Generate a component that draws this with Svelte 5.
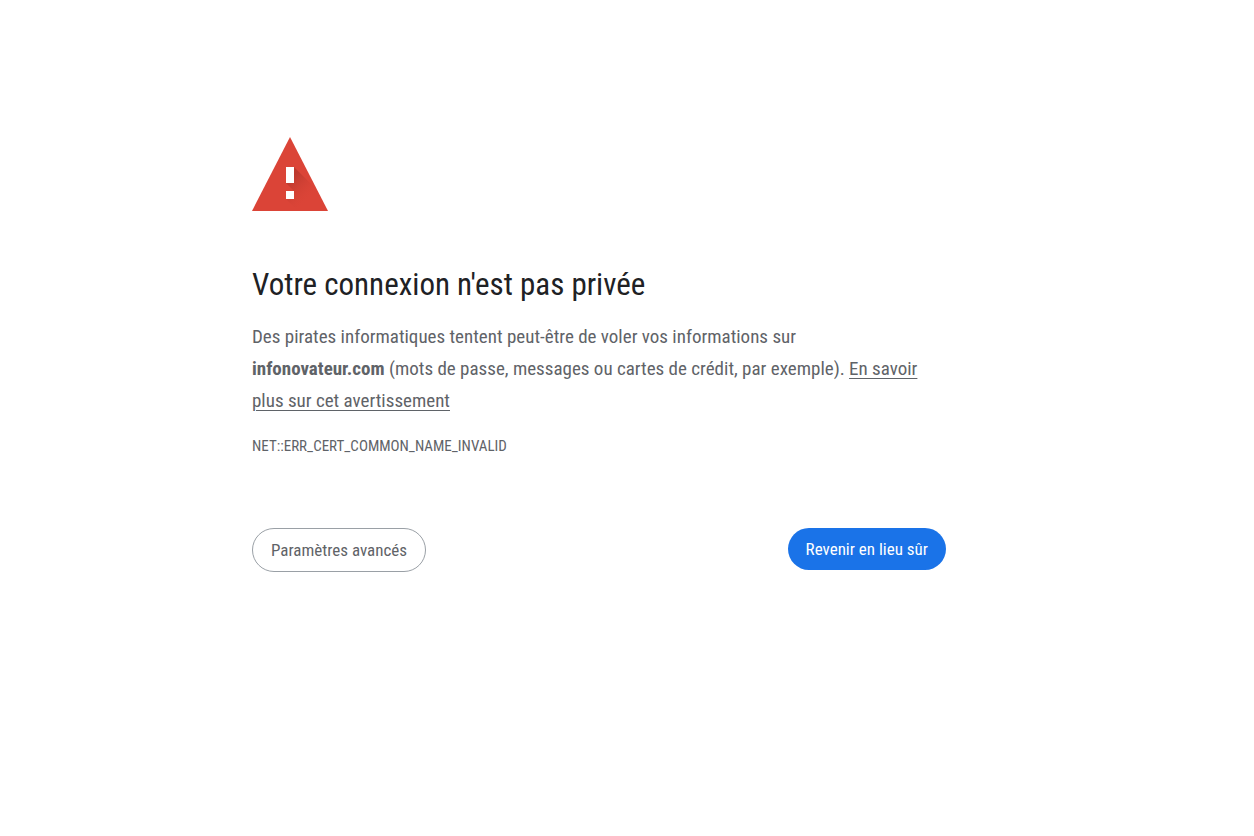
<script lang="ts">
	const host = 'infonovateur.com';
	const errorCode = 'NET::ERR_CERT_COMMON_NAME_INVALID';

	const goBack = () => {
		history.back();
	};
</script>

<main>
	<div class="interstitial">
		<svg class="icon" viewBox="0 0 76 74" aria-hidden="true">
			<defs>
				<linearGradient id="shadow" gradientUnits="userSpaceOnUse" x1="38" y1="42" x2="58" y2="62">
					<stop offset="0" stop-color="#a93228" stop-opacity="0.6" />
					<stop offset="1" stop-color="#db4437" stop-opacity="0" />
				</linearGradient>
			</defs>
			<path fill="#db4437" d="M38 0 76 74H0Z" />
			<path fill="url(#shadow)" d="M42 30 62 50 74 74H46L34 62H42V54L34 46H42Z" />
			<path fill="#fff" d="M34 30h8v16h-8zM34 54h8v8h-8z" />
		</svg>

		<h1>Votre connexion n'est pas privée</h1>
		<p>
			Des pirates informatiques tentent peut-être de voler vos informations sur<br />
			<strong>{host}</strong> (mots de passe, messages ou cartes de crédit, par exemple).
			<a href="#learn-more">En savoir plus sur cet avertissement</a>
		</p>
		<div class="error-code">{errorCode}</div>

		<div class="buttons">
			<button class="secondary">Paramètres avancés</button>
			<button class="primary" on:click={goBack}>Revenir en lieu sûr</button>
		</div>
	</div>
</main>

<style>
	:global(body) {
		margin: 0;
		background: #fff;
	}

	main {
		padding: 137px 56px 40px 0;
		color: #5f6368;
		font-family: 'Roboto Condensed', Roboto, sans-serif;
		font-size: 19px;
		line-height: 32px;
	}

	.interstitial {
		max-width: 694px;
		margin: 0 auto;
	}

	.icon {
		display: block;
		width: 76px;
		height: 74px;
	}

	h1 {
		margin: 52px 0 14px;
		color: #202124;
		font-size: 31px;
		font-weight: 400;
		line-height: 44px;
	}

	p {
		margin: 0;
	}

	a {
		color: inherit;
		text-decoration: underline;
		text-decoration-thickness: 1px;
		text-underline-offset: 3px;
	}

	.error-code {
		margin-top: 17px;
		font-size: 15px;
		line-height: 24px;
	}

	.buttons {
		display: flex;
		justify-content: space-between;
		align-items: flex-start;
		margin-top: 70px;
	}

	button {
		padding: 0 18px;
		border: 0;
		border-radius: 22px;
		font-family: inherit;
		font-size: 17px;
		line-height: 42px;
		cursor: pointer;
	}

	.primary {
		background: #1a73e8;
		color: #fff;
	}

	.secondary {
		border: 1px solid #9aa0a6;
		background: #fff;
		color: #5f6368;
	}
</style>
